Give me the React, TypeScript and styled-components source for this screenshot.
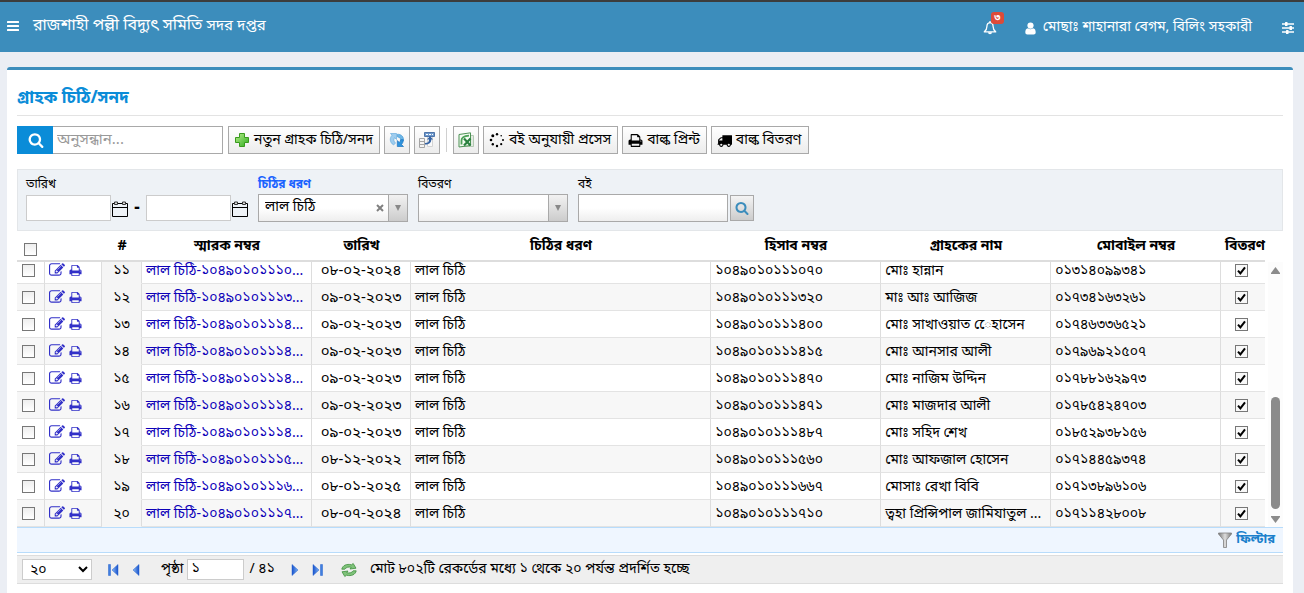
import React from "react";
import styled, { createGlobalStyle, css } from "styled-components";

const GlobalStyle = createGlobalStyle`
  *, *::before, *::after { box-sizing: border-box; }
  body {
    margin: 0;
    background: #ebeef4;
    color: #000;
    font-family: "Noto Sans Bengali", "Open Sans", "Liberation Sans", sans-serif;
    font-size: 14px;
    line-height: 24px;
  }
  button, input, select { font: inherit; color: inherit; margin: 0; }
  a { text-decoration: none; color: inherit; }
`;

const Page = styled.div`
  min-height: 100vh;
  display: flex;
  flex-direction: column;
`;

const TopBar = styled.header`
  display: flex;
  align-items: center;
  height: 52px;
  padding: 0 10px 2px 7px;
  background: #3c8dbc;
  border-top: 2px solid #3c3c3c;
  color: #fff;
`;

const IconButton = styled.button`
  display: inline-flex;
  align-items: center;
  justify-content: center;
  padding: 0;
  border: 0;
  background: none;
  cursor: pointer;
`;

const Brand = styled.a`
  margin-left: 14px;
  font-size: 16px;
  white-space: nowrap;
`;

const BrandSmall = styled.small`
  font-size: 15px;
`;

const TopNav = styled.nav`
  display: flex;
  align-items: center;
  margin-left: auto;
  padding-top: 4px;
`;

const BellButton = styled(IconButton)`
  position: relative;
  margin-right: 28px;
`;

const Badge = styled.span`
  position: absolute;
  left: 8px;
  top: -9px;
  width: 13px;
  height: 12px;
  border-radius: 3px;
  background: #dd4b39;
  font-size: 10px;
  line-height: 12px;
  font-weight: 700;
  text-align: center;
`;

const UserLink = styled.a`
  display: flex;
  align-items: center;
  gap: 7px;
  margin-right: 30px;
  white-space: nowrap;
`;

const Panel = styled.main`
  flex: 1;
  margin: 15px 11px 0 7px;
  padding: 0 10px 10px;
  background: #fff;
  border-top: 3px solid #3c8dbc;
  border-radius: 3px 3px 0 0;
`;

const Title = styled.h1`
  margin: 0;
  height: 46px;
  padding-top: 16px;
  border-bottom: 1px solid #e3e3e3;
  font-size: 17px;
  line-height: 26px;
  font-weight: 700;
  color: #0a8cd8;
`;

const Toolbar = styled.div`
  display: flex;
  align-items: center;
  gap: 4px;
  padding: 10px 0 15px;
`;

const SearchForm = styled.form`
  display: flex;
  width: 206px;
  height: 28px;
  margin-right: 1px;
`;

const SearchButton = styled(IconButton)`
  width: 36px;
  padding-left: 2px;
  background: #0a8cd8;
  color: #fff;
`;

const SearchInput = styled.input`
  flex: 1;
  min-width: 0;
  padding: 0 4px;
  border: 1px solid #a9a9a9;
  border-left: 0;
  outline: 0;
  font-size: 15px;
  &::placeholder { color: #999; }
`;

const ToolButton = styled.button<{ $square?: boolean }>`
  display: inline-flex;
  align-items: center;
  justify-content: center;
  gap: 4px;
  height: 28px;
  padding: 0 ${(p) => (p.$square ? "0" : "6px 0 5px")};
  ${(p) => p.$square && css`width: 26px;`}
  border: 1px solid #a9a9a9;
  background: linear-gradient(#fff, #ececec);
  white-space: nowrap;
  cursor: pointer;
`;

const ToolLabel = styled.span`
  padding-top: 2px;
`;

const Divider = styled.span`
  width: 1px;
  height: 24px;
  margin: 0 2px;
  background: #d0d0d0;
`;

const Filters = styled.form`
  display: flex;
  gap: 10px;
  height: 62px;
  padding: 4px 8px 0;
  background: #eef2f6;
  border: 1px solid #e3e6e9;
`;

const Field = styled.div`
  display: flex;
  flex-direction: column;
`;

const FieldLabel = styled.label<{ $active?: boolean }>`
  height: 20px;
  font-size: 12px;
  line-height: 22px;
  color: ${(p) => (p.$active ? "#1a63ff" : "#000")};
  font-weight: ${(p) => (p.$active ? 700 : 400)};
`;

const FieldRow = styled.div`
  display: flex;
  align-items: center;
  height: 28px;
`;

const DateInput = styled.input`
  width: 85px;
  height: 26px;
  padding: 0 4px;
  border: 1px solid #ccc;
`;

const CalendarButton = styled(IconButton)`
  width: 17px;
  height: 28px;
  padding-top: 2px;
`;

const Dash = styled.span`
  width: 18px;
  padding-top: 2px;
  font-size: 17px;
  font-weight: 700;
  text-align: center;
`;

const Combo = styled.div`
  position: relative;
  width: 150px;
  height: 28px;
  border: 1px solid #a9a9a9;
`;

const ComboSelect = styled.select`
  appearance: none;
  width: 100%;
  height: 100%;
  padding: 0 40px 0 6px;
  border: 0;
  border-radius: 0;
  background: linear-gradient(#fff, #fff 50%, #eee);
  line-height: 22px;
`;

const ComboArrow = styled.span`
  position: absolute;
  top: 0;
  right: 0;
  display: flex;
  align-items: center;
  justify-content: center;
  width: 19px;
  height: 26px;
  border-left: 1px solid #a9a9a9;
  background: linear-gradient(#f2f2f2, #ccc);
  pointer-events: none;
`;

const ComboClear = styled(IconButton)`
  position: absolute;
  top: 0;
  right: 20px;
  width: 14px;
  height: 26px;
`;

const BookInput = styled.input`
  width: 150px;
  height: 28px;
  padding: 0 6px;
  border: 1px solid #a9a9a9;
  background: linear-gradient(#fff, #fff 50%, #eee);
`;

const BookSearch = styled(IconButton)`
  width: 24px;
  height: 26px;
  margin-left: 2px;
  border: 1px solid #a9a9a9;
  background: linear-gradient(#f4f4f4, #ccc);
  color: #3c8dbc;
`;

const HeadWrap = styled.div`
  padding-right: 18px;
`;

const BodyWrap = styled.div`
  display: flex;
  align-items: flex-end;
  max-height: 265px;
  overflow: hidden;
`;

const ScrollTrack = styled.div`
  display: flex;
  flex-direction: column;
  align-items: center;
  align-self: stretch;
  width: 15px;
  height: 265px;
  margin-left: 3px;
  padding: 5px 0 4px;
  background: #fcfcfc;
`;

const ScrollThumb = styled.span`
  width: 9px;
  height: 112px;
  margin: auto 0 7px;
  border-radius: 5px;
  background: #8b8b8b;
`;

const Grid = styled.table`
  width: 100%;
  table-layout: fixed;
  border-collapse: separate;
  border-spacing: 0;
`;

const HeadCell = styled.th`
  height: 31px;
  padding: 3px 4px 0;
  border-bottom: 2px solid #ddd;
  line-height: 26px;
  font-weight: 700;
  text-align: center;
  white-space: nowrap;
`;

const HeadCheck = styled(HeadCell)`
  padding: 7px 6px 0 4px;
`;

const Row = styled.tr`
  background: #fff;
  &:nth-child(even) { background: #f7f7f7; }
`;

const Cell = styled.td`
  height: 27px;
  padding: 0 4px;
  border-right: 1px solid #ddd;
  border-bottom: 1px solid #e3e3e3;
  &:first-child, &:last-child { padding-right: 8px; }
  &:last-child { border-right: 0; }
`;

const TextCell = styled(Cell)<{ $center?: boolean; $large?: boolean }>`
  padding: 3px 4px 0;
  font-size: ${(p) => (p.$large ? 15 : 14)}px;
  line-height: 23px;
  text-align: ${(p) => (p.$center ? "center" : "left")};
  white-space: nowrap;
  overflow: hidden;
`;

const NumberCell = styled(TextCell)`
  background: #f5f5f5;
  border-bottom-color: #f5f5f5;
`;

const RowLink = styled.a`
  color: #0c00b8;
`;

const Actions = styled.div`
  display: flex;
  align-items: center;
  gap: 4px;
  color: #3230c8;
`;

const Check = styled.input`
  appearance: none;
  display: block;
  width: 13px;
  height: 13px;
  margin: 0 auto;
  border: 1px solid #777;
  background: linear-gradient(#eee, #fff);
  &:checked {
    background: #f8f8f8 url("data:image/svg+xml,%3Csvg xmlns='http://www.w3.org/2000/svg' viewBox='0 0 11 11'%3E%3Cpath d='M2 5.6 4.4 8.4 9 2.4' fill='none' stroke='%23000' stroke-width='2'/%3E%3C/svg%3E");
  }
`;

const FilterBar = styled.div`
  display: flex;
  align-items: center;
  justify-content: flex-end;
  height: 26px;
  padding: 0 8px;
  background: #eff6ff;
  border-top: 1px solid #b8dcfb;
  border-bottom: 1px solid #b8dcfb;
`;

const FilterLink = styled.button`
  display: flex;
  align-items: center;
  gap: 4px;
  padding: 0;
  border: 0;
  background: none;
  color: #1a80cc;
  font-size: 13px;
  line-height: 22px;
  font-weight: 700;
`;

const Pager = styled.div`
  display: flex;
  align-items: center;
  height: 29px;
  margin-top: 2px;
  padding: 0 5px;
  background: #efefef;
  border-top: 1px solid #ddd;
  border-bottom: 1px solid #ddd;
  white-space: nowrap;
`;

const PageSize = styled.select`
  width: 70px;
  height: 21px;
  margin-right: 13px;
  padding: 0 0 0 3px;
  border: 1px solid #ccc;
  border-radius: 0;
  background: #fff;
`;

const PagerButton = styled(IconButton)`
  width: 16px;
  height: 16px;
  margin-right: 7px;
`;

const PageLabel = styled.label`
  display: flex;
  align-items: center;
  gap: 4px;
  margin: 0 5px 0 10px;
`;

const PageInput = styled.input`
  width: 57px;
  height: 21px;
  padding: 0 3px;
  border: 1px solid #ccc;
  background: #fff;
`;

const PageTotal = styled.span`
  margin-right: 12px;
`;

const RefreshButton = styled(PagerButton)`
  margin-left: 8px;
`;

const Status = styled.span`
  margin-left: 6px;
`;

/* ---------- icons ---------- */

const fa = {
  edit: "M888 1184l116-116-152-152-116 116v56h96v96h56zm440-720q-16-16-33 1l-350 350q-17 17-1 33t33-1l350-350q17-17 1-33zm80 594v190q0 119-84.5 203.5t-203.5 84.5h-832q-119 0-203.5-84.5t-84.5-203.5v-832q0-119 84.5-203.5t203.5-84.5h832q63 0 117 25 15 7 18 23 3 17-9 29l-49 49q-14 14-32 8-23-6-45-6h-832q-66 0-113 47t-47 113v832q0 66 47 113t113 47h832q66 0 113-47t47-113v-126q0-13 9-22l64-64q15-15 35-7t20 29zm-96-738l288 288-672 672h-288v-288zm444 132l-92 92-288-288 92-92q28-28 68-28t68 28l152 152q28 28 28 68t-28 68z",
  print: "M448 1536h896v-256h-896v256zm0-640h896v-384h-160q-40 0-68-28t-28-68v-160h-640v640zm1152 64q0-26-19-45t-45-19-45 19-19 45 19 45 45 19 45-19 19-45zm128 0v416q0 13-9.5 22.5t-22.5 9.5h-224v160q0 40-28 68t-68 28h-960q-40 0-68-28t-28-68v-160h-224q-13 0-22.5-9.5t-9.5-22.5v-416q0-79 56.5-135.5t135.5-56.5h64v-544q0-40 28-68t68-28h672q40 0 88 20t76 48l152 152q28 28 48 76t20 88v256h64q79 0 135.5 56.5t56.5 135.5z",
  search: "M1216 832q0-185-131.5-316.5t-316.5-131.5-316.5 131.5-131.5 316.5 131.5 316.5 316.5 131.5 316.5-131.5 131.5-316.5zm512 832q0 52-38 90t-90 38q-54 0-90-38l-343-342q-179 124-399 124-143 0-273.5-55.5t-225-150-150-225-55.5-273.5 55.5-273.5 150-225 225-150 273.5-55.5 273.5 55.5 225 150 150 225 55.5 273.5q0 220-124 399l343 343q37 37 37 90z",
  truck: "M640 1408q0-52-38-90t-90-38-90 38-38 90 38 90 90 38 90-38 38-90zm-384-512h384v-256h-158q-13 0-22 9l-195 195q-9 9-9 22v30zm1280 512q0-52-38-90t-90-38-90 38-38 90 38 90 90 38 90-38 38-90zm256-1088v1024q0 15-4 26.5t-13.5 18.5-16.5 11.5-23.5 6-22.5 2-25.5 0-22.5-.5q0 106-75 181t-181 75-181-75-75-181h-384q0 106-75 181t-181 75-181-75-75-181h-64q-3 0-22.5.5t-25.5 0-22.5-2-23.5-6-16.5-11.5-13.5-18.5-4-26.5q0-26 19-45t45-19v-320q0-8-.5-35t0-38 2.5-34.5 6.500-37 14-30.500 22.500-30l198-198q19-19 50.500-32t58.500-13h160v-192q0-26 19-45t45-19h1024q26 0 45 19t19 45z",
};

const Fa = ({ name, size = 16 }: { name: keyof typeof fa; size?: number }) => (
  <svg width={size} height={size} viewBox="0 0 1792 1792" fill="currentColor" aria-hidden="true">
    <path d={fa[name]} />
  </svg>
);

const MenuIcon = () => (
  <svg width="12" height="14" viewBox="0 0 12 14" fill="#fff"><rect width="12" height="2" rx=".5" y="2" /><rect width="12" height="2" rx=".5" y="6" /><rect width="12" height="2" rx=".5" y="10" /></svg>
);
const BellIcon = () => (
  <svg width="14" height="14" viewBox="0 0 14 14" fill="none" stroke="#fff" strokeWidth="1.3">
    <path d="M7 1.6C4.7 1.8 3.9 3.6 3.9 5.6c0 2.6-.8 4-2.6 5.3h11.4c-1.8-1.3-2.6-2.7-2.6-5.3 0-2-.8-3.8-3.1-4z" strokeLinejoin="round" />
    <path d="M7 0v2" /><path d="M5 11.300a2 2 0 0 0 4 0z" fill="#fff" stroke="none" />
  </svg>
);
const UserIcon = () => (
  <svg width="11" height="13" viewBox="0 0 11 13" fill="#fff"><circle cx="5.5" cy="3.6" r="3.1" /><path d="M3 6.2C1 6.4.3 8.3.3 10.3.3 11.8 1.2 12.5 2.3 12.5h6.400c1.100 0 2-.7 2-2.200 0-2-.7-3.900-2.700-4.100a4 4 0 0 1-5 0z" /></svg>
);
const SlidersIcon = () => (
  <svg width="12" height="12" viewBox="0 0 12 12" fill="#fff"><path d="M0 1h12v2H0zM0 5h12v2H0zM0 9h12v2H0z" opacity=".75" /><rect x="3" y="0" width="2.500" height="4" rx=".5" /><rect x="7.500" y="4" width="2.500" height="4" rx=".5" /><rect x="4" y="8" width="2.500" height="4" rx=".5" /></svg>
);
const PlusIcon = () => (
  <svg width="16" height="16" viewBox="0 0 16 16"><defs><linearGradient id="plus" x2="1" y2="1"><stop stopColor="#b6ec8a" /><stop offset="1" stopColor="#2fae1f" /></linearGradient></defs><path d="M5.500 1.500h5v4h4v5h-4v4h-5v-4h-4v-5h4z" fill="url(#plus)" stroke="#3a9a1e" strokeLinejoin="round" /></svg>
);
const ReloadIcon = () => (
  <svg width="16" height="16" viewBox="0 0 16 16">
    <path d="M1.500 1.500h6v6L5.600 5.700C4.300 7.500 4.800 9.500 6.500 11L4.500 13C.6 10.200.4 6.200 3 3.200z" fill="#9fcdee" stroke="#6aaede" strokeWidth=".7" />
    <path d="M8.500 2.200c4 0 6.500 2.800 5.800 6.300h-2.600c.3-1.800-.8-3.300-3.200-3.600z" fill="#6db6e6" stroke="#4b9cd8" strokeWidth=".7" />
    <path d="M14.500 14.500h-6.200v-6l2 2c.9-1 1.300-1.800 1.400-2.800h2.700c0 1.800-.7 3.400-1.900 4.800z" fill="#2f93dc" stroke="#1c74bf" strokeWidth=".7" />
  </svg>
);
const ColumnsIcon = () => (
  <svg width="16" height="16" viewBox="0 0 16 16">
    <path d="M5.500.5h10v4h-10z" fill="#6f9acd" stroke="#4f74a8" /><path d="M7 2.500h2M10 2.500h2M13 2.500h1" stroke="#fff" />
    <path d="M8.500 5v9.500h5V5" fill="#fafafa" stroke="#d4d4d4" />
    <path d="M.5 6.500h5v9h-5zM.5 9.500h5M.5 12.500h5" fill="#f4f4f4" stroke="#a5a5a5" />
    <path d="M6 11c3 0 4-1 4-3.500H8L11 4l3 3.500h-1.700c0 3.200-2.200 5-6.300 5z" fill="#3563a4" />
  </svg>
);
const ExcelIcon = () => (
  <svg width="16" height="16" viewBox="0 0 16 16">
    <path d="M3.500 3.500h12v11h-12z" fill="#e4ece3" stroke="#b4c8b3" />
    <path d="M1 2.500 12.500.8v12.700L1 15z" fill="#f3fbf1" stroke="#4d9255" />
    <path d="M3.500 12.500v-4c0-3 2.500-4.500 7.500-4.800" fill="none" stroke="#4da157" strokeWidth="1.800" />
    <path d="M6 6.500 12.500 13.500M12.500 6.500 6 13.500" stroke="#2b8140" strokeWidth="2.200" />
  </svg>
);
const SpinnerIcon = () => (
  <svg width="16" height="16" viewBox="0 0 16 16"><circle cx="8" cy="2.200" r="1.200" /><circle cx="12.200" cy="3.800" r=".8" /><circle cx="14" cy="8" r="1" /><circle cx="12.200" cy="12.200" r="1.100" /><circle cx="8" cy="14" r="1.200" /><circle cx="3.800" cy="12.200" r="1.200" /><circle cx="2" cy="8" r="1.300" /><circle cx="3.800" cy="3.800" r="1.500" /></svg>
);
const CalendarIcon = () => (
  <svg width="16" height="16" viewBox="0 0 16 16" fill="none" stroke="#000"><path d="M.5 2.500h15v13H.5zM.5 6.500h15" /><path d="M2.500 3.500v-2.500h3v2.500zM10.500 3.500v-2.500h3v2.500z" fill="#ddd" stroke="#333" /></svg>
);
const DownIcon = () => <svg width="8" height="6" viewBox="0 0 8 6"><path d="M1 0h6L4 6z" fill="#888" /></svg>;
const ClearIcon = () => <svg width="8" height="8" viewBox="0 0 8 8"><path d="M1 1l6 6M7 1L1 7" stroke="#808080" strokeWidth="2" /></svg>;
const ScrollArrow = ({ down }: { down?: boolean }) => (
  <svg width="9" height="7" viewBox="0 0 9 7"><path d={down ? "M0 0h9v1L4.500 7 0 1z" : "M0 7h9V6L4.500 0 0 6z"} fill="#8b8b8b" /></svg>
);
const FunnelIcon = () => (
  <svg width="14" height="16" viewBox="0 0 14 16"><defs><linearGradient id="funnel"><stop stopColor="#777" /><stop offset=".5" stopColor="#ddd" /><stop offset="1" stopColor="#777" /></linearGradient></defs><path d="M.5 1h13v1L8.500 8v7.500h-3V8L.5 2z" fill="url(#funnel)" stroke="#808080" strokeWidth=".8" /></svg>
);
const NavIcon = ({ back, edge }: { back?: boolean; edge?: boolean }) => (
  <svg width="12" height="12" viewBox="0 0 12 12">
    <defs><linearGradient id={back ? "nb" : "nf"}><stop stopColor={back ? "#8fbdf5" : "#7db2f2"} /><stop offset="1" stopColor="#1550cc" /></linearGradient></defs>
    <g transform={back ? undefined : "matrix(-1 0 0 1 12 0)"}>
      {edge && <path d="M1.500.5h2v11h-2z" fill="#3f7ee0" stroke="#2561cc" strokeWidth=".5" />}
      <path d={edge ? "M11 .5v11L5 6z" : "M9 .5v11L3 6z"} fill={`url(#${back ? "nb" : "nf"})`} stroke="#2561cc" strokeWidth=".5" />
    </g>
  </svg>
);
const RefreshIcon = () => (
  <svg width="16" height="16" viewBox="0 0 16 16" fill="#7fc27a" stroke="#3f8f3d" strokeWidth=".8"><path d="M.8 7.200C1.500 3.500 5.500 1.500 10.500 2.800L12.200 1.500 15 6.200 9 7l1.200-1.700C7.500 4.500 4.800 5.500 3.800 7.200z" /><path d="M15.200 8.800c-.7 3.700-4.700 5.700-9.700 4.400L3.800 14.500 1 9.800 7 9l-1.200 1.700c2.700.8 5.400-.2 6.400-1.900z" /></svg>
);

/* ---------- data ---------- */

type Letter = [no: string, memo: string, date: string, account: string, name: string, mobile: string];

const letters: Letter[] = [
  ["১১", "১০৪৯০১০১১১০...", "০৮-০২-২০২৪", "১০৪৯০১০১১১০৭০", "মোঃ হান্নান", "০১৩১৪০৯৯৩৪১"],
  ["১২", "১০৪৯০১০১১১৩...", "০৯-০২-২০২৩", "১০৪৯০১০১১১৩২০", "মাঃ আঃ আজিজ", "০১৭৩৪১৬৩২৬১"],
  ["১৩", "১০৪৯০১০১১১৪...", "০৯-০২-২০২৩", "১০৪৯০১০১১১৪০০", "মোঃ সাখাওয়াত েেহাসেন", "০১৭৪৬৩৩৬৫২১"],
  ["১৪", "১০৪৯০১০১১১৪...", "০৯-০২-২০২৩", "১০৪৯০১০১১১৪১৫", "মোঃ আনসার আলী", "০১৭৯৬৯২১৫০৭"],
  ["১৫", "১০৪৯০১০১১১৪...", "০৯-০২-২০২৩", "১০৪৯০১০১১১৪৭০", "মোঃ নাজিম উদ্দিন", "০১৭৮৮১৬২৯৭৩"],
  ["১৬", "১০৪৯০১০১১১৪...", "০৯-০২-২০২৩", "১০৪৯০১০১১১৪৭১", "মোঃ মাজদার আলী", "০১৭৮৫৪২৪৭০৩"],
  ["১৭", "১০৪৯০১০১১১৪...", "০৯-০২-২০২৩", "১০৪৯০১০১১১৪৮৭", "মোঃ সহিদ শেখ", "০১৮৫২৯৩৮১৫৬"],
  ["১৮", "১০৪৯০১০১১১৫...", "০৮-১২-২০২২", "১০৪৯০১০১১১৫৬০", "মোঃ আফজাল হোসেন", "০১৭১৪৪৫৯৩৭৪"],
  ["১৯", "১০৪৯০১০১১১৬...", "০৮-০১-২০২৫", "১০৪৯০১০১১১৬৬৭", "মোসাঃ রেখা বিবি", "০১৭১৩৮৯৬১০৬"],
  ["২০", "১০৪৯০১০১১১৭...", "০৮-০৭-২০২৪", "১০৪৯০১০১১১৭১০", "ত্বহা প্রিন্সিপাল জামিযাতুল ...", "০১৭১১৪২৮০০৮"],
];

const headings = ["#", "স্মারক নম্বর", "তারিখ", "চিঠির ধরণ", "হিসাব নম্বর", "গ্রাহকের নাম", "মোবাইল নম্বর", "বিতরণ"];

const Col = styled.col<{ $w?: number }>`
  width: ${(p) => (p.$w ? `${p.$w}px` : "auto")};
`;

const Columns = () => (
  <colgroup>
    {[28, 57, 40, 170, 99, 0, 170, 170, 170, 44].map((w, i) => (
      <Col key={i} $w={w} />
    ))}
  </colgroup>
);

export default function App() {
  return (
    <Page>
      <GlobalStyle />
      <TopBar>
        <IconButton aria-label="মেনু"><MenuIcon /></IconButton>
        <Brand href="#">রাজশাহী পল্লী বিদ্যুৎ সমিতি <BrandSmall>সদর দপ্তর</BrandSmall></Brand>
        <TopNav>
          <BellButton aria-label="বিজ্ঞপ্তি"><BellIcon /><Badge>৩</Badge></BellButton>
          <UserLink href="#"><UserIcon />মোছাঃ শাহানারা বেগম, বিলিং সহকারী</UserLink>
          <IconButton aria-label="সেটিংস"><SlidersIcon /></IconButton>
        </TopNav>
      </TopBar>

      <Panel>
        <Title>গ্রাহক চিঠি/সনদ</Title>

        <Toolbar>
          <SearchForm>
            <SearchButton type="button" aria-label="খুঁজুন"><Fa name="search" size={16} /></SearchButton>
            <SearchInput aria-label="অনুসন্ধান" placeholder="অনুসন্ধান..." />
          </SearchForm>
          <ToolButton><PlusIcon /><ToolLabel>নতুন গ্রাহক চিঠি/সনদ</ToolLabel></ToolButton>
          <ToolButton $square aria-label="রিলোড"><ReloadIcon /></ToolButton>
          <ToolButton $square aria-label="কলাম"><ColumnsIcon /></ToolButton>
          <Divider />
          <ToolButton $square aria-label="এক্সেল"><ExcelIcon /></ToolButton>
          <ToolButton><SpinnerIcon /><ToolLabel>বই অনুযায়ী প্রসেস</ToolLabel></ToolButton>
          <ToolButton><Fa name="print" size={15} /><ToolLabel>বাল্ক প্রিন্ট</ToolLabel></ToolButton>
          <ToolButton><Fa name="truck" size={15} /><ToolLabel>বাল্ক বিতরণ</ToolLabel></ToolButton>
        </Toolbar>

        <Filters>
          <Field>
            <FieldLabel htmlFor="from">তারিখ</FieldLabel>
            <FieldRow>
              <DateInput id="from" />
              <CalendarButton type="button" aria-label="শুরুর তারিখ"><CalendarIcon /></CalendarButton>
              <Dash>-</Dash>
              <DateInput aria-label="শেষ তারিখ" />
              <CalendarButton type="button" aria-label="শেষ তারিখ"><CalendarIcon /></CalendarButton>
            </FieldRow>
          </Field>
          <Field>
            <FieldLabel htmlFor="kind" $active>চিঠির ধরণ</FieldLabel>
            <Combo>
              <ComboSelect id="kind"><option>লাল চিঠি</option></ComboSelect>
              <ComboClear type="button" aria-label="মুছুন"><ClearIcon /></ComboClear>
              <ComboArrow><DownIcon /></ComboArrow>
            </Combo>
          </Field>
          <Field>
            <FieldLabel htmlFor="delivery">বিতরণ</FieldLabel>
            <Combo>
              <ComboSelect id="delivery"><option></option></ComboSelect>
              <ComboArrow><DownIcon /></ComboArrow>
            </Combo>
          </Field>
          <Field>
            <FieldLabel htmlFor="book">বই</FieldLabel>
            <FieldRow>
              <BookInput id="book" />
              <BookSearch type="button" aria-label="বই খুঁজুন"><Fa name="search" size={14} /></BookSearch>
            </FieldRow>
          </Field>
        </Filters>

        <HeadWrap>
          <Grid>
            <Columns />
            <thead>
              <tr>
                <HeadCheck><Check type="checkbox" aria-label="সব নির্বাচন" /></HeadCheck>
                <HeadCell />
                {headings.map((h) => <HeadCell key={h}>{h}</HeadCell>)}
              </tr>
            </thead>
          </Grid>
        </HeadWrap>
        <BodyWrap>
          <Grid>
            <Columns />
            <tbody>
              {letters.map(([no, memo, date, account, name, mobile]) => (
                <Row key={no}>
                  <Cell><Check type="checkbox" aria-label={`নির্বাচন ${no}`} /></Cell>
                  <Cell>
                    <Actions>
                      <IconButton aria-label="সম্পাদনা"><Fa name="edit" size={16} /></IconButton>
                      <IconButton aria-label="প্রিন্ট"><Fa name="print" size={13} /></IconButton>
                    </Actions>
                  </Cell>
                  <NumberCell $center>{no}</NumberCell>
                  <TextCell><RowLink href="#">লাল চিঠি-{memo}</RowLink></TextCell>
                  <TextCell $center $large>{date}</TextCell>
                  <TextCell>লাল চিঠি</TextCell>
                  <TextCell>{account}</TextCell>
                  <TextCell>{name}</TextCell>
                  <TextCell>{mobile}</TextCell>
                  <Cell><Check type="checkbox" defaultChecked aria-label={`বিতরণ ${no}`} /></Cell>
                </Row>
              ))}
            </tbody>
          </Grid>
          <ScrollTrack><ScrollArrow /><ScrollThumb /><ScrollArrow down /></ScrollTrack>
        </BodyWrap>

        <FilterBar>
          <FilterLink type="button"><FunnelIcon />ফিল্টার</FilterLink>
        </FilterBar>

        <Pager>
          <PageSize aria-label="প্রতি পৃষ্ঠায়"><option>২০</option></PageSize>
          <PagerButton aria-label="প্রথম"><NavIcon back edge /></PagerButton>
          <PagerButton aria-label="পূর্ববর্তী"><NavIcon back /></PagerButton>
          <PageLabel>পৃষ্ঠা <PageInput defaultValue="১" /></PageLabel>
          <PageTotal>/ ৪১</PageTotal>
          <PagerButton aria-label="পরবর্তী"><NavIcon /></PagerButton>
          <PagerButton aria-label="শেষ"><NavIcon edge /></PagerButton>
          <RefreshButton aria-label="রিফ্রেশ"><RefreshIcon /></RefreshButton>
          <Status>মোট ৮০২টি রেকর্ডের মধ্যে ১ থেকে ২০ পর্যন্ত প্রদর্শিত হচ্ছে</Status>
        </Pager>
      </Panel>
    </Page>
  );
}
